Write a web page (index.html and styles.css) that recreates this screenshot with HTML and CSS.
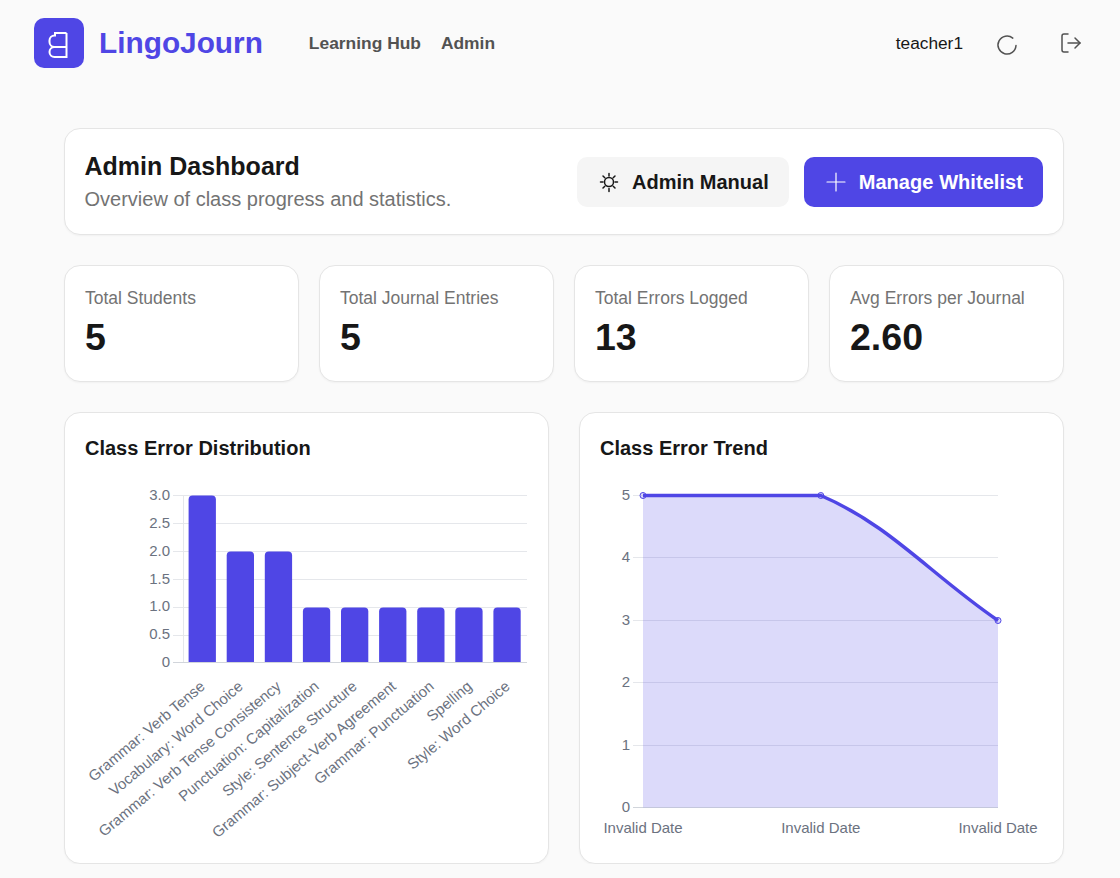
FILE: index.html
```html
<!DOCTYPE html>
<html lang="en">
<head>
<meta charset="utf-8">
<title>LingoJourn</title>
<link rel="stylesheet" href="styles.css">
</head>
<body>
<header class="topbar">
  <div class="brand">
    <span class="logo">
      <svg viewBox="0 0 50 50" width="50" height="50" fill="none" stroke="#fff" stroke-width="2"><path d="M32.5 15v24H20.5a5 5 0 0 1 0-10H32.5"/><path d="M32.5 15H21v2.5h-.5a5 5 0 0 0-5 5V24a5 5 0 0 0 5 5"/></svg>
    </span>
    <span class="brand-name">LingoJourn</span>
  </div>
  <nav class="nav">
    <a class="nav-link">Learning Hub</a>
    <a class="nav-link">Admin</a>
  </nav>
  <div class="user">
    <span class="username">teacher1</span>
    <svg class="uicon uicon-low" viewBox="0 0 24 24" width="24" height="24"><path d="M21 12.5a9 9 0 1 1-3.2-7.4"/></svg>
    <svg class="uicon" viewBox="0 0 24 24" width="24" height="24"><path d="M9 21H5a2 2 0 0 1-2-2V5a2 2 0 0 1 2-2h4"/><path d="M16 17l5-5-5-5"/><path d="M21 12H9"/></svg>
  </div>
</header>
<main class="page">
  <section class="card hero">
    <div class="hero-text">
      <h1 class="hero-title">Admin Dashboard</h1>
      <p class="hero-sub">Overview of class progress and statistics.</p>
    </div>
    <div class="actions">
      <button class="btn btn-light">
        <svg class="bicon" viewBox="0 0 24 24" width="24" height="24"><circle cx="12" cy="12" r="4.5"/><path d="M12 3.5v2.5M12 18.5v3M3.5 12H6M18 12h2.5M6 6l1.8 1.8M16.2 16.2L18 18M6 18l1.8-1.8M16.2 7.8L18 6"/></svg>
        <span class="btn-text">Admin Manual</span>
      </button>
      <button class="btn btn-primary">
        <svg class="bicon thin" viewBox="0 0 24 24" width="24" height="24"><path d="M12 3v18M3 12h18"/></svg>
        <span class="btn-text">Manage Whitelist</span>
      </button>
    </div>
  </section>
  <section class="stats">
    <div class="card stat"><div class="stat-label">Total Students</div><div class="stat-value">5</div></div>
    <div class="card stat"><div class="stat-label">Total Journal Entries</div><div class="stat-value">5</div></div>
    <div class="card stat"><div class="stat-label">Total Errors Logged</div><div class="stat-value">13</div></div>
    <div class="card stat"><div class="stat-label">Avg Errors per Journal</div><div class="stat-value">2.60</div></div>
  </section>
  <section class="charts">
    <div class="card chart">
      <h2 class="chart-title">Class Error Distribution</h2>
      <svg class="plot" viewBox="85 470 443 373" width="443" height="373">
        <g class="grid">
          <path d="M173 495.5H527M173 523.5H527M173 551.5H527M173 579.5H527M173 607.5H527M173 635.5H527"/>
          <path d="M183.5 495V662"/>
        </g>
        <path class="axis" d="M173 662.5H527"/>
        <g class="tick end">
          <text x="170" y="500">3.0</text>
          <text x="170" y="528">2.5</text>
          <text x="170" y="556">2.0</text>
          <text x="170" y="584">1.5</text>
          <text x="170" y="611">1.0</text>
          <text x="170" y="639">0.5</text>
          <text x="170" y="667">0</text>
        </g>
        <g class="bars">
          <path d="M188.6 662V499.5a4 4 0 0 1 4-4h19.3a4 4 0 0 1 4 4V662z"/>
          <path d="M226.7 662V555.5a4 4 0 0 1 4-4h19.3a4 4 0 0 1 4 4V662z"/>
          <path d="M264.8 662V555.5a4 4 0 0 1 4-4h19.3a4 4 0 0 1 4 4V662z"/>
          <path d="M302.9 662V611.5a4 4 0 0 1 4-4h19.3a4 4 0 0 1 4 4V662z"/>
          <path d="M341 662V611.5a4 4 0 0 1 4-4h19.3a4 4 0 0 1 4 4V662z"/>
          <path d="M379.1 662V611.5a4 4 0 0 1 4-4h19.3a4 4 0 0 1 4 4V662z"/>
          <path d="M417.2 662V611.5a4 4 0 0 1 4-4h19.3a4 4 0 0 1 4 4V662z"/>
          <path d="M455.3 662V611.5a4 4 0 0 1 4-4h19.3a4 4 0 0 1 4 4V662z"/>
          <path d="M493.4 662V611.5a4 4 0 0 1 4-4h19.3a4 4 0 0 1 4 4V662z"/>
        </g>
        <g class="tick end">
          <text transform="translate(206 688) rotate(-40)">Grammar: Verb Tense</text>
          <text transform="translate(244 688) rotate(-40)">Vocabulary: Word Choice</text>
          <text transform="translate(282 688) rotate(-40)">Grammar: Verb Tense Consistency</text>
          <text transform="translate(320 688) rotate(-40)">Punctuation: Capitalization</text>
          <text transform="translate(358 688) rotate(-40)">Style: Sentence Structure</text>
          <text transform="translate(397 688) rotate(-40)">Grammar: Subject-Verb Agreement</text>
          <text transform="translate(435 688) rotate(-40)">Grammar: Punctuation</text>
          <text transform="translate(473 688) rotate(-40)">Spelling</text>
          <text transform="translate(511 688) rotate(-40)">Style: Word Choice</text>
        </g>
      </svg>
    </div>
    <div class="card chart">
      <h2 class="chart-title">Class Error Trend</h2>
      <svg class="plot" viewBox="600 470 443 373" width="443" height="373">
        <path class="grid" d="M633 495.5H998M633 557.5H998M633 620.5H998M633 682.5H998M633 745.5H998"/>
        <path class="axis" d="M633 807.5H998"/>
        <g class="tick end">
          <text x="630" y="500">5</text>
          <text x="630" y="562">4</text>
          <text x="630" y="625">3</text>
          <text x="630" y="687">2</text>
          <text x="630" y="750">1</text>
          <text x="630" y="812">0</text>
        </g>
        <path class="area" d="M643 495.5H820.8C890 525 930 574 998 620.5V807.5H643z"/>
        <path class="line" d="M643 495.5H820.8C890 525 930 574 998 620.5"/>
        <g class="dots">
          <circle cx="643" cy="495.5" r="3"/>
          <circle cx="820.8" cy="495.5" r="3"/>
          <circle cx="998" cy="620.5" r="3"/>
        </g>
        <g class="tick mid">
          <text x="643" y="833">Invalid Date</text>
          <text x="820.8" y="833">Invalid Date</text>
          <text x="998" y="833">Invalid Date</text>
        </g>
      </svg>
    </div>
  </section>
</main>
</body>
</html>
```

FILE: styles.css
```css
* { box-sizing: border-box; }
html, body { margin: 0; padding: 0; }
body {
  background: #fafafa;
  color: #171717;
  font-family: "Liberation Sans", Arial, sans-serif;
}
.topbar {
  display: flex;
  align-items: center;
  height: 86px;
  padding: 0 37px 0 34px;
}
.brand { display: flex; align-items: center; gap: 15px; }
.logo {
  display: block;
  width: 50px;
  height: 50px;
  border-radius: 10px;
  background: #4f46e5;
}
.logo svg { display: block; }
.brand-name { font-size: 29.8px; font-weight: 700; color: #4f46e5; }
.nav { display: flex; gap: 20px; margin-left: 46px; }
.nav-link { font-size: 17.4px; font-weight: 700; color: #525252; }
.user { display: flex; align-items: center; margin-left: auto; }
.username { font-size: 17.3px; color: #171717; margin-right: 32px; }
.uicon {
  display: block;
  fill: none;
  stroke: #525252;
  stroke-width: 1.5;
  stroke-linecap: round;
  stroke-linejoin: round;
}
.uicon-low { margin-top: 4px; }
.uicon + .uicon { margin-left: 40px; }
.page { width: 1000px; margin: 42px 0 0 64px; }
.card {
  background: #fff;
  border: 1px solid #e5e5e5;
  border-radius: 16px;
  box-shadow: 0 1px 2px rgba(0, 0, 0, 0.04);
}
.hero {
  display: flex;
  align-items: center;
  justify-content: space-between;
  height: 107px;
  padding: 0 20px 0 19.5px;
}
.hero-text { padding-top: 2px; }
.hero-title { margin: -1px 0 1px; font-size: 25px; line-height: 32px; font-weight: 700; }
.hero-sub { margin: 0; font-size: 20px; line-height: 32px; color: #737373; }
.actions { display: flex; gap: 15px; }
.btn {
  display: flex;
  align-items: center;
  gap: 11px;
  height: 50px;
  padding: 0 20px;
  border: 0;
  border-radius: 10px;
  font-family: inherit;
  font-size: 20px;
  font-weight: 700;
}
.btn-text { padding-top: 2px; }
.btn-light { background: #f5f5f5; color: #171717; }
.btn-primary { background: #4f46e5; color: #fff; letter-spacing: 0.06px; }
.bicon { fill: none; stroke: currentColor; stroke-width: 1.5; stroke-linecap: round; }
.bicon.thin { stroke-width: 1.2; }
.stats { display: grid; grid-template-columns: repeat(4, minmax(0, 1fr)); gap: 20px; margin-top: 30px; }
.stat { height: 117px; padding: 20px; }
.stat-label { font-size: 17.5px; line-height: 24px; color: #737373; }
.stat-value { font-size: 37.5px; line-height: 40px; font-weight: 700; margin-top: 7px; }
.charts { display: grid; grid-template-columns: repeat(2, minmax(0, 1fr)); gap: 30px; margin-top: 30px; }
.chart { height: 452px; padding: 20px; }
.chart-title { margin: 0; height: 37px; padding-top: 1px; font-size: 20px; line-height: 28px; font-weight: 700; color: #171717; }
.plot { display: block; overflow: visible; }
.grid { fill: none; stroke: #e5e7eb; stroke-width: 1; }
.axis { fill: none; stroke: #d1d5db; stroke-width: 1; }
.tick { font-size: 15px; fill: #6b7280; }
.tick.end { text-anchor: end; }
.tick.mid { text-anchor: middle; }
.bars { fill: #4f46e5; }
.area { fill: #4f46e5; fill-opacity: 0.2; }
.line { fill: none; stroke: #4f46e5; stroke-width: 3.5; }
.dots { fill: rgba(79, 70, 229, 0.2); stroke: #4f46e5; stroke-width: 1; }
```
